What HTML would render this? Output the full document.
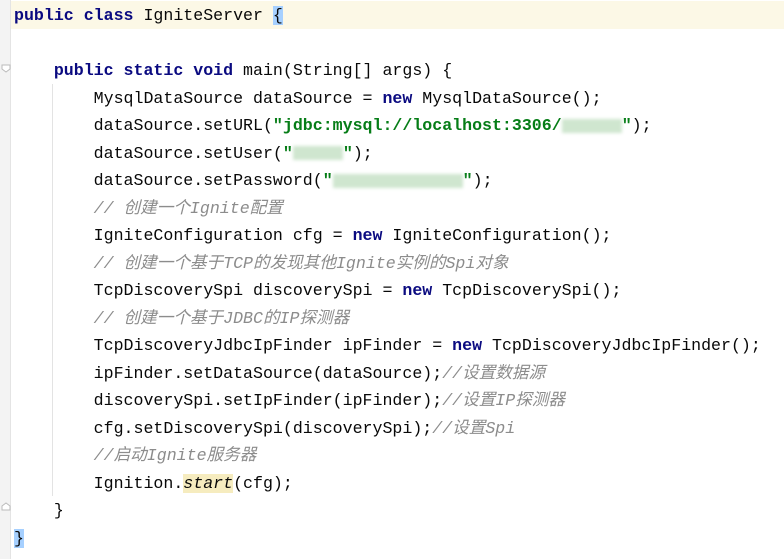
<!DOCTYPE html>
<html><head><meta charset="utf-8"><style>
html,body{margin:0;padding:0;width:784px;height:559px;overflow:hidden;background:#fff}
.gut{position:absolute;left:0;top:0;width:10px;height:559px;background:#f3f3f3;border-right:1px solid #e4e4e4}
.hl{position:absolute;left:11px;top:1px;width:773px;height:28px;background:#fcf8e6}
.guide{position:absolute;width:1px;background:#e3e3e3}
pre{position:absolute;left:14px;top:2px;margin:0;font-family:"Liberation Mono","Noto Sans CJK SC",monospace;font-size:16.6px;line-height:27.5px;color:#080808}
.k{color:#0a0a80;font-weight:bold}
.s{color:#067d17;font-weight:bold}
.c{color:#8c8c8c;font-style:italic}
.b{background:#a6d0ff}
.y{background:#f6ecbf;font-style:italic}
.bl{display:inline-block;height:14px;background:#cfe6cf;vertical-align:middle;filter:blur(1.5px)}
.fold{position:absolute;left:1px;width:10px;height:9px}
</style></head><body>
<div class="gut"></div>
<div class="hl"></div>
<div class="guide" style="left:52px;top:84px;height:412px"></div>
<svg class="fold" style="top:64px" viewBox="0 0 10 9"><path d="M1 1H9V5L5 8L1 5Z" fill="#fff" stroke="#bbb"/></svg>
<svg class="fold" style="top:502px" viewBox="0 0 10 9"><path d="M1 8H9V4L5 1L1 4Z" fill="#fff" stroke="#bbb"/></svg>
<pre><span class="k">public class</span> IgniteServer <span class="b">{</span>

    <span class="k">public static void</span> main(String[] args) {
        MysqlDataSource dataSource = <span class="k">new</span> MysqlDataSource();
        dataSource.setURL(<span class="s">"jdbc:mysql://localhost:3306/<span class="bl" style="width:60px"></span>"</span>);
        dataSource.setUser(<span class="s">"<span class="bl" style="width:50px"></span>"</span>);
        dataSource.setPassword(<span class="s">"<span class="bl" style="width:130px"></span>"</span>);
        <span class="c">// 创建一个Ignite配置</span>
        IgniteConfiguration cfg = <span class="k">new</span> IgniteConfiguration();
        <span class="c">// 创建一个基于TCP的发现其他Ignite实例的Spi对象</span>
        TcpDiscoverySpi discoverySpi = <span class="k">new</span> TcpDiscoverySpi();
        <span class="c">// 创建一个基于JDBC的IP探测器</span>
        TcpDiscoveryJdbcIpFinder ipFinder = <span class="k">new</span> TcpDiscoveryJdbcIpFinder();
        ipFinder.setDataSource(dataSource);<span class="c">//设置数据源</span>
        discoverySpi.setIpFinder(ipFinder);<span class="c">//设置IP探测器</span>
        cfg.setDiscoverySpi(discoverySpi);<span class="c">//设置Spi</span>
        <span class="c">//启动Ignite服务器</span>
        Ignition.<span class="y">start</span>(cfg);
    }
<span class="b">}</span></pre>
</body></html>
